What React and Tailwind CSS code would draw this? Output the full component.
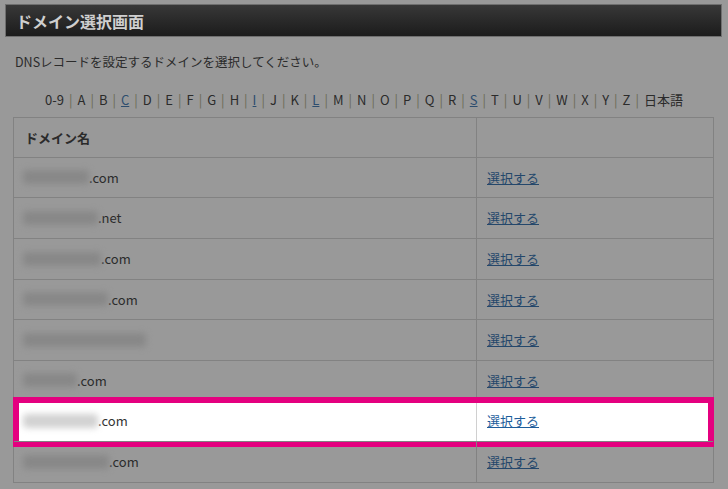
const letters = ["0-9", "A", "B", "C", "D", "E", "F", "G", "H", "I", "J", "K", "L", "M", "N", "O", "P", "Q", "R", "S", "T", "U", "V", "W", "X", "Y", "Z", "日本語"];
const linked = ["C", "I", "L", "S"];

const rows = [
  { blur: 66, tld: ".com", h: "h-[40px]" },
  { blur: 75, tld: ".net", h: "h-[41px]" },
  { blur: 78, tld: ".com", h: "h-[41px]" },
  { blur: 85, tld: ".com", h: "h-[40px]" },
  { blur: 123, tld: "", h: "h-[41px]" },
  { blur: 54, tld: ".com", h: "h-[40px]" },
  { blur: 75, tld: ".com", h: "h-[41px]", active: true },
  { blur: 86, tld: ".com", h: "h-[41px]" },
];

function DomainRow({ row }) {
  const active = row.active;
  return (
    <div
      className={`relative flex ${row.h} border-t border-[#828282] ${
        active ? "bg-white text-[#333]" : "text-[#2b2b2b]"
      }`}
    >
      <div
        className={`flex w-[463px] items-center pl-[9px] border-r ${
          active ? "border-[#d0d0d0]" : "border-[#828282]"
        }`}
      >
        <span
          className={`h-[14px] rounded-sm blur-[3px] ${
            active ? "bg-[#d2d2d2]" : "bg-[#888888]"
          }`}
          style={{ width: row.blur }}
        />
        <span>{row.tld}</span>
      </div>
      <div className="flex flex-1 items-center pl-[10px]">
        <a
          href="#"
          className={`underline ${active ? "text-[#1d5d9b]" : "text-[#24476b]"}`}
        >
          選択する
        </a>
      </div>
      {active && (
        <div className="pointer-events-none absolute left-[-1px] right-[-1px] top-[-4px] bottom-[-6px] border-[6px] border-[#e4007f]" />
      )}
    </div>
  );
}

export default function App() {
  return (
    <div
      className="w-[728px] h-[489px] overflow-hidden bg-[#999999] text-[13px]"
      style={{ fontFamily: '"Noto Sans CJK JP", "Noto Sans", sans-serif' }}
    >
      {/* title bar */}
      <div className="pt-[4px] pl-[5px] pr-[6px]">
        <div className="flex h-[33px] items-center bg-gradient-to-b from-[#383838] to-[#1c1c1c] pl-[10px] border border-[#6f6f6f]">
          <h1 className="text-[16px] font-bold text-[#cfcfcf]">ドメイン選択画面</h1>
        </div>
      </div>

      <p className="mt-[16px] pl-[15px] text-[12.5px] text-[#2b2b2b]">
        DNSレコードを設定するドメインを選択してください。
      </p>

      {/* index */}
      <div className="mt-[20px] flex justify-center text-[13px] text-[#2b2b2b] leading-[16px]">
        {letters.map((l, i) => (
          <span key={l} className="flex">
            {i > 0 && <span className="px-[5px] text-[#6a6a55]">|</span>}
            {linked.includes(l) ? (
              <a href="#" className="underline text-[#2d4d6e]">
                {l}
              </a>
            ) : (
              <span>{l}</span>
            )}
          </span>
        ))}
      </div>

      {/* table */}
      <div className="mt-[9px] ml-[13px] w-[701px] border-x border-b border-[#828282]">
        <div className="flex h-[40px] border-t border-[#828282] font-bold text-[#2b2b2b]">
          <div className="flex w-[463px] items-center pl-[11px] border-r border-[#828282]">
            ドメイン名
          </div>
          <div className="flex-1" />
        </div>
        {rows.map((row, i) => (
          <DomainRow key={i} row={row} />
        ))}
      </div>
    </div>
  );
}
